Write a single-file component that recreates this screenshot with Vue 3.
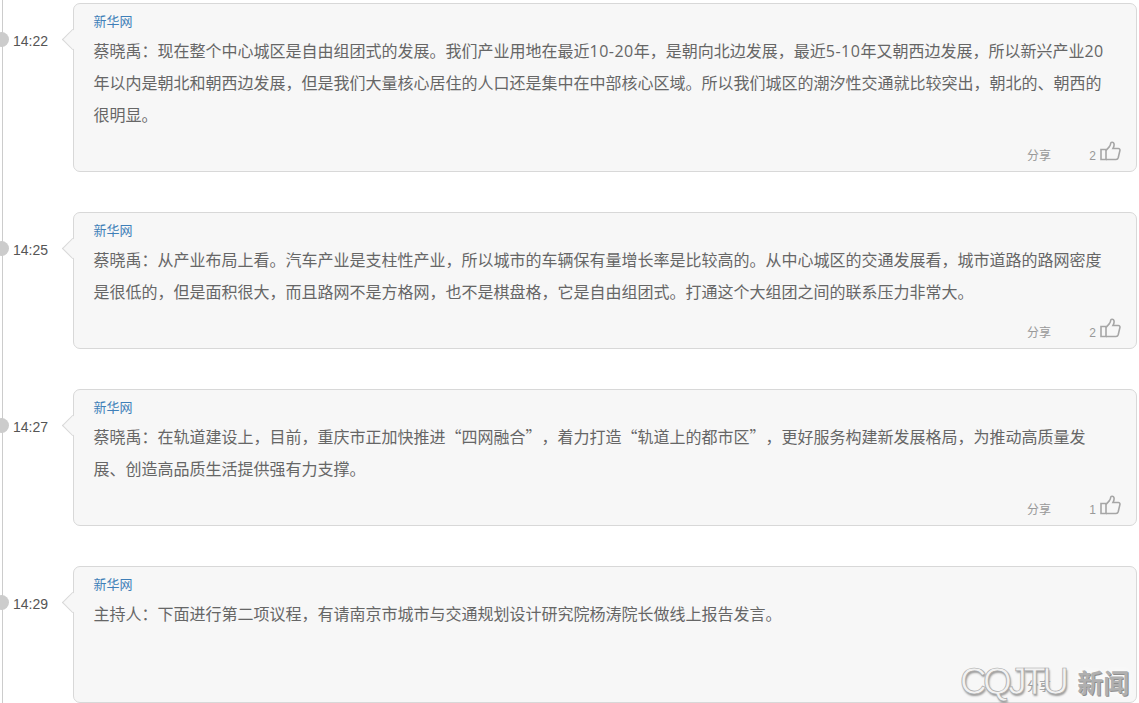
<script setup>
const items = [
  { time: '14:22', likes: 2, text: '蔡晓禹：现在整个中心城区是自由组团式的发展。我们产业用地在最近10-20年，是朝向北边发展，最近5-10年又朝西边发展，所以新兴产业20年以内是朝北和朝西边发展，但是我们大量核心居住的人口还是集中在中部核心区域。所以我们城区的潮汐性交通就比较突出，朝北的、朝西的很明显。' },
  { time: '14:25', likes: 2, text: '蔡晓禹：从产业布局上看。汽车产业是支柱性产业，所以城市的车辆保有量增长率是比较高的。从中心城区的交通发展看，城市道路的路网密度是很低的，但是面积很大，而且路网不是方格网，也不是棋盘格，它是自由组团式。打通这个大组团之间的联系压力非常大。' },
  { time: '14:27', likes: 1, text: '蔡晓禹：在轨道建设上，目前，重庆市正加快推进“四网融合”，着力打造“轨道上的都市区”，更好服务构建新发展格局，为推动高质量发展、创造高品质生活提供强有力支撑。' },
  { time: '14:29', likes: null, text: '主持人：下面进行第二项议程，有请南京市城市与交通规划设计研究院杨涛院长做线上报告发言。' },
]
const parts = (text) =>
  text.split(/(\d[\d-]*)/).map((value, index) => ({ value, isNum: index % 2 === 1 }))
</script>

<template>
  <div class="page">
    <div v-for="item in items" :key="item.time" class="row">
      <div class="stamp">
        <span class="dot"></span>
        <span class="time">{{ item.time }}</span>
      </div>
      <div class="card">
        <span class="arrow"></span>
        <div class="source">新华网</div>
        <p class="body"><template v-for="(part, i) in parts(item.text)" :key="i"><span v-if="part.isNum" class="num">{{ part.value }}</span><template v-else>{{ part.value }}</template></template></p>
        <div class="footer">
          <span class="share">分享</span>
          <div class="like-group">
            <template v-if="item.likes !== null">
              <span class="likes">{{ item.likes }}</span>
              <svg class="thumb" width="21" height="20" viewBox="0 0 21 20" fill="none" stroke="#a6a6a6" stroke-width="1.6">
                <path d="M1 8.500h5v10H1z" />
                <path d="M6 9.500l3.200-3.600c.9-1 1.400-2.200 1.500-3.600.1-1.500 2.800-1.600 3.300.5.300 1.500-.2 3.300-1 4.700h5.300c1.200 0 1.900 1 1.600 2.100l-1.700 7.200c-.3 1-1 1.700-2.100 1.700H6" />
              </svg>
            </template>
          </div>
        </div>
      </div>
    </div>
    <div class="mark"><span class="mark-latin">CQJTU</span><span class="mark-cjk">新闻</span></div>
  </div>
</template>

<style>
html, body { margin: 0; height: 703px; overflow: hidden; background: #fff; }
</style>

<style scoped>
.page {
  position: relative;
  width: 1139px;
  height: 703px;
  box-sizing: border-box;
  padding: 3px 2px 0 0;
  display: flex;
  flex-direction: column;
  gap: 40px;
  overflow: hidden;
  font-family: "Noto Sans CJK SC", "Noto Sans", sans-serif;
  text-spacing-trim: space-all;
}
.page::before {
  content: "";
  position: absolute;
  left: 2px;
  top: 0;
  bottom: 0;
  width: 1px;
  background: #ccc;
}
.row {
  display: flex;
  align-items: flex-start;
}
.stamp {
  position: relative;
  width: 73px;
  flex: none;
  padding: 28px 0 0 13px;
  box-sizing: border-box;
}
.dot {
  position: absolute;
  left: -6px;
  top: 29px;
  width: 15px;
  height: 15px;
  border-radius: 50%;
  background: #ccc;
}
.time {
  font-family: "Liberation Sans", Arial, sans-serif;
  font-size: 14px;
  line-height: 20px;
  color: #555;
  display: block;
}
.card {
  position: relative;
  flex: 1;
  min-width: 0;
  box-sizing: border-box;
  background: #f7f7f7;
  border: 1px solid #d8d8d8;
  border-radius: 7px;
  padding: 7px 20px 0 19.5px;
}
.arrow {
  position: absolute;
  left: -9px;
  top: 28px;
  width: 15px;
  height: 15px;
  background: #f7f7f7;
  border-left: 1px solid #d8d8d8;
  border-bottom: 1px solid #d8d8d8;
  box-sizing: border-box;
  transform: rotate(45deg);
}
.source {
  font-size: 13px;
  line-height: 20px;
  color: #3f7fb8;
  margin-bottom: 3px;
}
.body {
  margin: 0;
  font-size: 16px;
  line-height: 32px;
  min-height: 64px;
  color: #666;
}
.num {
  font-family: "Open Sans", sans-serif;
  letter-spacing: 0.5px;
  line-height: 1;
}
.footer {
  height: 41px;
  display: flex;
  align-items: center;
  justify-content: flex-end;
  margin-right: -5px;
}
.share {
  font-size: 12px;
  color: #999;
  margin-right: 38px;
  position: relative;
  top: 4px;
  left: -1px;
}
.like-group {
  width: 31px;
  height: 20px;
  display: flex;
  align-items: center;
  justify-content: flex-end;
}
.likes {
  font-family: "Liberation Sans", Arial, sans-serif;
  font-size: 12px;
  color: #999;
  margin-right: 4px;
  position: relative;
  top: 5px;
}
.thumb {
  flex: none;
}
.mark {
  position: absolute;
  left: 960px;
  top: 664px;
  display: flex;
  align-items: center;
  gap: 12px;
  line-height: 36px;
}
.mark-latin {
  font-family: "Liberation Sans", Arial, sans-serif;
  font-size: 37px;
  font-weight: 400;
  letter-spacing: -3.6px;
  color: #f2f2f2;
  -webkit-text-stroke: 0.7px #a8a8a8;
  text-shadow: 1px 2px 2px #9a9a9a;
}
.mark-cjk {
  font-size: 26px;
  font-weight: 700;
  color: #b0b0b0;
  text-shadow: 1px 1px 0 #8f8f8f, 0 0 8px #fff;
}
</style>
